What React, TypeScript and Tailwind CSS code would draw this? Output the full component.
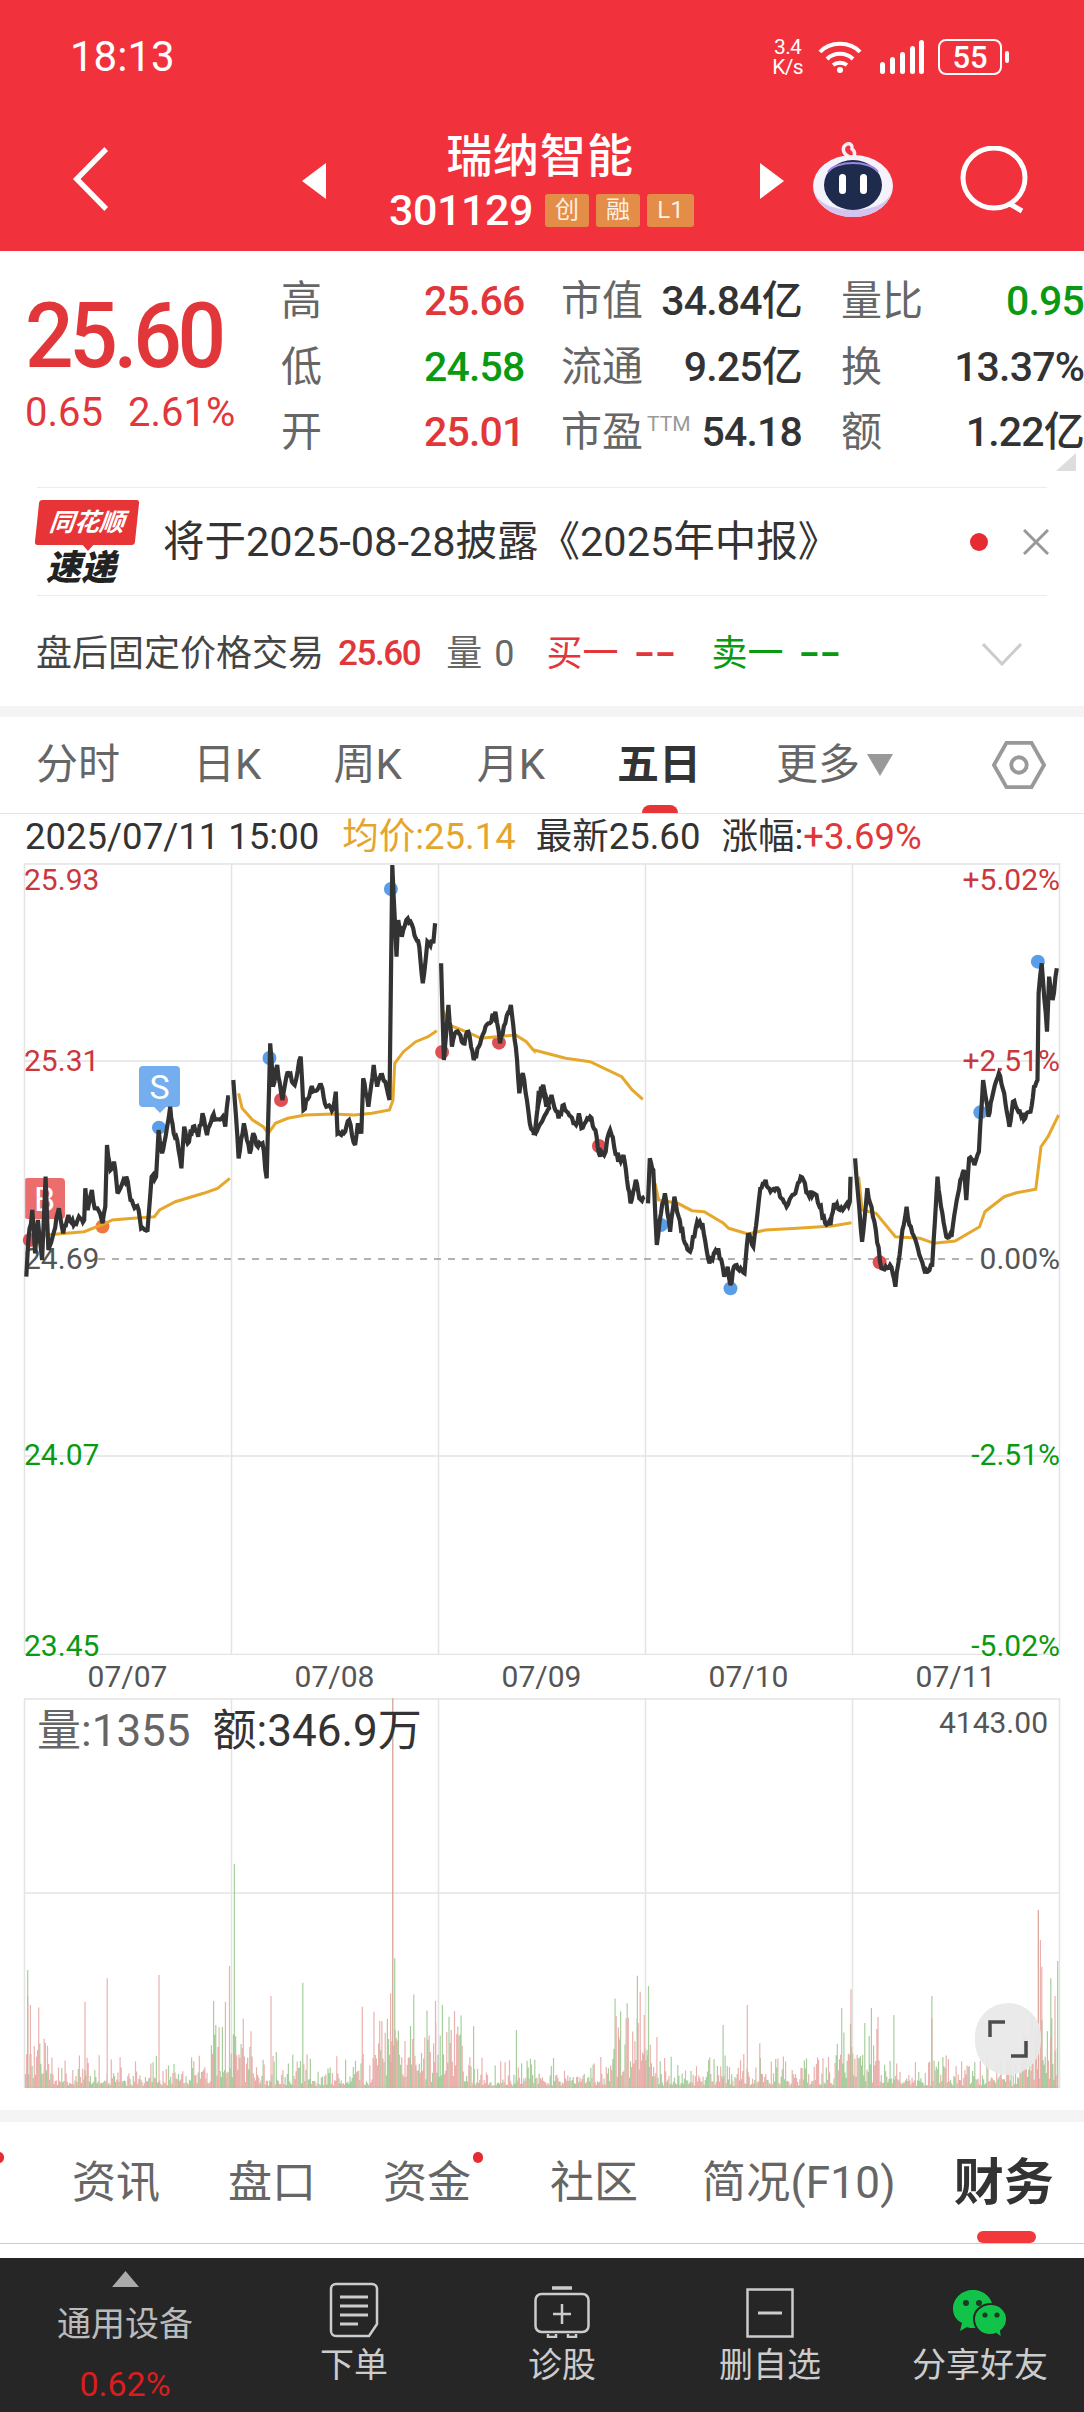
import React from "react";

type P = [number, number];
const a = (pts: number[][]): P[] => pts.map(([x, y]) => [x / 2.85, 860 + y / 3]);
const b = (pts: number[][]): P[] => pts.map(([x, y]) => [534 + x / 2.85, 860 + y / 3]);

let seed = 7;
const rnd = () => {
  seed = (seed * 16807) % 2147483647;
  return seed / 2147483647;
};

const jag = (pts: P[]) => {
  let out = "";
  pts.forEach((p, i) => {
    if (i > 0) {
      const q = pts[i - 1];
      const n = Math.max(1, Math.round(Math.abs(p[0] - q[0]) / 1.4));
      for (let k = 1; k < n; k++) {
        const t = k / n;
        const y = q[1] + (p[1] - q[1]) * t + (rnd() - 0.5) * 7;
        out += ` L${(q[0] + (p[0] - q[0]) * t).toFixed(1)} ${y.toFixed(1)}`;
      }
    }
    out += ` ${i === 0 ? "M" : "L"}${p[0].toFixed(1)} ${p[1].toFixed(1)}`;
  });
  return out;
};
const smooth = (pts: P[]) => pts.map((p, i) => `${i === 0 ? "M" : "L"}${p[0].toFixed(1)} ${p[1].toFixed(1)}`).join(" ");

const price: P[][] = [
  a([[75,1250],[80,1150],[92,1050],[100,1180],[108,1080],[120,1200],[130,950],[138,1170],[150,1130],[168,1045],[180,1120],[195,1065],[210,1095],[225,1070],[240,1080],[243,985],[250,1050],[262,990],[270,1045],[285,1060],[292,1090],[300,1040],[305,855],[315,930],[325,905],[335,1000],[360,950],[372,1020],[395,1050],[402,1105],[420,1115],[432,950],[445,950],[452,810],[462,880],[472,830],[485,740],[495,820],[505,840],[517,925],[525,800],[535,850],[550,800],[565,830],[577,760],[590,825],[605,770],[635,770],[642,800],[650,712],[655,712]]),
  a([[665,660],[680,895],[695,790],[712,880],[722,820],[735,860],[748,850],[760,955],[770,550],[778,680],[790,615],[805,720],[820,635],[840,675],[857,590],[865,750],[885,690],[915,675],[930,740],[950,745],[957,695],[962,820],[980,820],[995,780],[1012,855],[1020,790],[1030,815],[1035,655],[1050,740],[1065,615],[1075,680],[1085,645],[1098,665],[1110,720],[1118,15],[1130,290],[1135,180],[1145,230],[1158,180],[1170,185],[1185,235],[1195,260],[1205,370],[1218,245],[1235,250],[1240,190]]),
  [
    ...a([[1257,310],[1265,600],[1278,435],[1288,560],[1300,515],[1320,550],[1335,515],[1350,600],[1372,535],[1392,490],[1412,455],[1425,550],[1440,490],[1456,435],[1470,560],[1480,700],[1490,640],[1510,790],[1525,820],[1535,700],[1548,675],[1565,745]]),
    ...b([[0,820],[20,680],[35,740],[50,705],[70,775],[85,735],[120,795],[128,760],[135,805],[160,770],[175,810],[185,880],[200,885],[217,810],[240,905],[255,885],[265,960],[275,1030],[290,960],[300,1015],[315,1010]]),
  ],
  b([[325,1030],[330,895],[340,930],[350,1155],[362,1060],[373,1000],[388,1115],[400,1010],[412,1070],[430,1150],[445,1175],[465,1085],[480,1090],[500,1210],[525,1165],[542,1250],[552,1220],[560,1275],[570,1220],[600,1240],[610,1125],[625,1160],[645,985],[660,960],[670,985],[690,985],[720,1040],[745,1000],[760,950],[780,1000],[805,1005],[830,1090],[845,1095],[855,1030],[880,1050],[900,1025],[902,950]]),
  b([[915,895],[935,1145],[950,985],[970,1085],[990,1225],[1015,1215],[1030,1280],[1050,1110],[1062,1040],[1070,1095],[1090,1150],[1115,1240],[1135,1215],[1150,950],[1160,1040],[1175,1130],[1190,1130],[1205,1020],[1215,960],[1225,930],[1232,1020],[1240,895],[1255,915],[1268,875],[1280,660],[1295,770],[1305,715],[1325,640],[1340,700],[1355,800],[1365,725],[1400,775],[1415,755],[1425,680],[1435,660],[1438,400],[1447,310],[1462,515],[1468,350],[1478,420],[1490,325]]),
];

const avg: P[][] = [
  a([[95,1160],[130,1125],[240,1115],[300,1090],[320,1080],[380,1075],[440,1070],[455,1050],[500,1025],[580,1000],[620,985],[655,955]]),
  a([[680,700],[690,745],[720,780],[750,800],[765,820],[785,790],[820,775],[870,765],[950,762],[1010,765],[1060,760],[1110,750],[1120,720],[1125,610],[1150,575],[1185,545],[1220,530],[1245,512]]),
  [
    ...a([[1262,450],[1280,495],[1340,520],[1370,535],[1470,525],[1500,545],[1520,570],[1522,572]]),
    ...b([[0,570],[90,595],[160,605],[250,650],[280,690],[310,718]]),
  ],
  b([[345,970],[355,1020],[410,1030],[450,1052],[485,1055],[540,1090],[555,1105],[610,1122],[660,1110],[750,1105],[850,1098],[905,1088]]),
  b([[925,950],[935,1050],[975,1060],[1030,1130],[1100,1135],[1140,1150],[1200,1143],[1270,1100],[1285,1055],[1340,1010],[1375,998],[1430,988],[1445,860],[1465,830],[1495,765]]),
];

const blueDots: P[] = [...a([[1114,87],[768,594],[453,803]]), ...b([[1436,305],[1272,757],[560,1285],[362,1095]])];
const redDots: P[] = [...a([[801,720],[1260,576],[1422,548],[85,1140]]), ...b([[185,858],[985,1207]])];

const pricePath = price.map(jag).join(" ");
const avgPath = avg.map(smooth).join(" ");

const VBOTTOM = 2088;
const spikes: [number, number, "r" | "g"][] = [
  [40,990,"g"],[44,1095,"r"],[155,1015,"r"],[123,1085,"r"],[230,1005,"r"],[332,978,"r"],[339,672,"g"],[326,1085,"r"],[392,1068,"r"],[438,1028,"g"],[568,175,"g"],[568,175,"r"],[571,955,"g"],[565,1060,"r"],[524,1100,"r"],[541,1115,"r"],[630,1083,"r"],[640,1095,"g"],[685,1158,"g"],[747,1170,"g"],[895,1190,"g"],[922,1007,"g"],[926,1055,"r"],[938,1038,"g"],[932,1125,"r"],[1081,1095,"r"],[1046,1155,"g"],[1099,1210,"r"],[1231,1048,"r"],[1293,1125,"g"],[1348,1068,"g"],[1348,1135,"r"],[1502,810,"g"],[1502,810,"r"],[1505,900,"r"],[1505,980,"r"],[1507,980,"r"],[1530,963,"g"],[1520,1015,"g"],[1526,1068,"r"],
];
const hot = [28, 232, 394, 442, 636, 857, 1045];
let redBars = "";
let greenBars = "";
for (let x = 25.5; x < 1058; x += 1.1) {
  const near = Math.min(...hot.map((h) => Math.abs(h - x)));
  const boost = near < 22 ? 2.2 : 1;
  const r = rnd();
  let h = (2 + r * r * r * 28 + rnd() * 6) * boost;
  if (near < 22 && rnd() > 0.6) h += 18;
  const seg = `M${x.toFixed(1)} ${VBOTTOM}V${(VBOTTOM - h).toFixed(1)}`;
  if (rnd() > 0.5) redBars += seg;
  else greenBars += seg;
}
spikes.forEach(([zx, zy, c]) => {
  const seg = `M${(zx / 1.4465).toFixed(1)} ${VBOTTOM}V${(1640 + zy / 3).toFixed(1)}`;
  if (c === "r") redBars += seg;
  else greenBars += seg;
});

const gridX = [231.5, 438.5, 645.5, 852.5];

const Cell = ({ children, cls }: { children: React.ReactNode; cls: string }) => (
  <span className={`font-medium tracking-[-0.02em] text-[41px] leading-none ${cls}`}>{children}</span>
);
const Label = ({ children }: { children: React.ReactNode }) => <span className="text-[41px] leading-none text-[#666]">{children}</span>;

const Row = ({ l, v, vc, l2, v2, l3, v3, v3c }: { l: string; v: string; vc: string; l2: React.ReactNode; v2: string; l3: string; v3: string; v3c: string }) => (
  <>
    <div className="flex items-center h-[65.5px]"><Label>{l}</Label></div>
    <div className="flex items-center h-[65.5px]"><Cell cls={vc}>{v}</Cell></div>
    <div className="flex items-center justify-between h-[65.5px] pr-[39px]">
      <Label>{l2}</Label>
      <Cell cls="text-[#333]">{v2}</Cell>
    </div>
    <div className="flex items-center justify-between h-[65.5px]">
      <Label>{l3}</Label>
      <Cell cls={v3c}>{v3}</Cell>
    </div>
  </>
);

const LeftLabel = ({ t, y, c }: { t: string; y: string; c: string }) => (
  <span className={`absolute left-[24px] -translate-y-1/2 text-[30px] leading-none ${y} ${c}`}>{t}</span>
);
const RightLabel = ({ t, y, c }: { t: string; y: string; c: string }) => (
  <span className={`absolute right-[24px] -translate-y-1/2 text-[30px] leading-none ${y} ${c}`}>{t}</span>
);

const Robot = () => (
  <svg width="84" height="76" viewBox="0 0 84 76">
    <path d="M37 14c-6-3-6-10-1-12 3-1 5 1 5 3M41 7c3 2 3 5 2 8" fill="none" stroke="#f6eef6" strokeWidth="3.5" strokeLinecap="round" />
    <ellipse cx="42" cy="44" rx="40" ry="31" fill="#f4f2fb" />
    <path d="M4 52c5 15 21 23 38 23s33-8 38-23c-6 11-21 16-38 16S10 63 4 52z" fill="#d3c5f0" />
    <ellipse cx="42" cy="43" rx="29" ry="25" fill="#1e2b4d" />
    <path d="M17 30c8-12 42-12 50 0" fill="none" stroke="#9f86e6" strokeWidth="2" />
    <rect x="28" y="32" width="7" height="20" rx="3.5" fill="#fff" />
    <rect x="49" y="32" width="7" height="20" rx="3.5" fill="#fff" />
  </svg>
);

const BottomItem = ({ icon, t, w }: { icon: React.ReactNode; t: string; w: string }) => (
  <div className={`flex flex-col items-center shrink-0 ${w}`}>
    <div className="h-[58px] flex items-end justify-center">{icon}</div>
    <span className="mt-[5px] text-[34px] leading-[44px] text-[#ccc] whitespace-nowrap">{t}</span>
  </div>
);

export default function App() {
  return (
    <div className="relative w-[1084px] h-[2412px] overflow-hidden bg-white font-['Roboto','Noto_Sans_CJK_SC',sans-serif]">
      {/* Header */}
      <header className="h-[251px] bg-[#f1323c] text-white flex flex-col">
        <div className="flex items-center h-[114px] pl-[70px] pr-[75px]">
          <span className="text-[42px] leading-none">18:13</span>
          <div className="ml-auto flex items-center">
            <div className="flex flex-col items-center text-[21px] leading-[20px] tracking-[-0.03em]">
              <span>3.4</span>
              <span>K/s</span>
            </div>
            <svg className="ml-[15px]" width="44" height="34" viewBox="0 0 44 34" fill="none" stroke="#fff" strokeWidth="4">
              <path d="M2 12C12 1 32 1 42 12" />
              <path d="M9 19c7-7 19-7 26 0" />
              <path d="M15 25c4-3 10-3 14 0" />
              <circle cx="22" cy="30" r="3" fill="#fff" stroke="none" />
            </svg>
            <svg className="ml-[18px]" width="44" height="34" viewBox="0 0 44 34" fill="#fff">
              <rect x="0" y="22" width="5" height="12" rx="2.5" />
              <rect x="10" y="17" width="5" height="17" rx="2.5" />
              <rect x="20" y="12" width="5" height="22" rx="2.5" />
              <rect x="30" y="6" width="5" height="28" rx="2.5" />
              <rect x="39" y="0" width="5" height="34" rx="2.5" />
            </svg>
            <div className="ml-[14px] w-[64px] h-[36px] rounded-[8px] border-2 border-white flex items-center justify-center text-[31px] leading-none font-medium">55</div>
            <div className="ml-[3px] w-[4px] h-[12px] rounded-full bg-white" />
          </div>
        </div>
        <div className="relative flex-1 flex items-start">
          <svg className="ml-[72px] mt-[32px]" width="42" height="66" viewBox="0 0 42 66" fill="none" stroke="#fff" strokeWidth="5.5">
            <path d="M36 3 5 33l31 30" transform="scale(0.95 1)" />
          </svg>
          <svg className="ml-[188px] mt-[49px]" width="24" height="36" viewBox="0 0 24 36" fill="#fff"><path d="M24 0v36L0 18z" /></svg>
          <div className="ml-[32px] w-[364px] flex flex-col items-center">
            <span className="mt-[16px] text-[46px] leading-[52px] font-medium tracking-[0.02em]">瑞纳智能</span>
            <div className="mt-[8px] flex items-center pl-[3px] whitespace-nowrap">
              <span className="text-[43px] leading-[40px] font-medium tracking-[-0.01em]">301129</span>
              <span className="ml-[12px] w-[44px] h-[33px] rounded-[3px] bg-[#e38d49] flex items-center justify-center text-[24px] leading-none text-[#fdf0e0]">创</span>
              <span className="ml-[7px] w-[44px] h-[33px] rounded-[3px] bg-[#e38d49] flex items-center justify-center text-[24px] leading-none text-[#fdf0e0]">融</span>
              <span className="ml-[7px] w-[47px] h-[33px] rounded-[3px] bg-[#e38d49] flex items-center justify-center text-[24px] leading-none text-[#fdf0e0]">L1</span>
            </div>
          </div>
          <svg className="ml-[38px] mt-[49px]" width="24" height="36" viewBox="0 0 24 36" fill="#fff"><path d="M0 0v36l24-18z" /></svg>
          <div className="ml-[27px] mt-[28px]"><Robot /></div>
          <svg className="ml-[65px] mt-[32px]" width="70" height="70" viewBox="0 0 70 70" fill="none" stroke="#fff" strokeWidth="5">
            <ellipse cx="34" cy="32" rx="31" ry="30" />
            <path d="M50 58l12 7" />
          </svg>
        </div>
      </header>

      {/* Quote */}
      <section className="relative h-[236px] flex">
        <div className="w-[281px] pl-[25px] flex flex-col">
          <span className="mt-[41px] origin-left scale-x-[0.94] text-[91px] leading-[88px] font-medium text-[#e2373a] tracking-[-0.05em]">25.60</span>
          <div className="mt-[13px] flex text-[40px] leading-[40px] text-[#e2373a]">
            <span>0.65</span>
            <span className="ml-[25px]">2.61%</span>
          </div>
        </div>
        <div className="pt-[18px] grid grid-cols-[143px_137px_280px_243px] h-fit">
          <Row l="高" v="25.66" vc="text-[#e2373a]" l2="市值" v2="34.84亿" l3="量比" v3="0.95" v3c="text-[#0a9a12]" />
          <Row l="低" v="24.58" vc="text-[#0a9a12]" l2="流通" v2="9.25亿" l3="换" v3="13.37%" v3c="text-[#333]" />
          <Row
            l="开"
            v="25.01"
            vc="text-[#e2373a]"
            l2={
              <span className="flex items-start">
                市盈<span className="ml-[4px] text-[21px] leading-[24px] text-[#999]">TTM</span>
              </span>
            }
            v2="54.18"
            l3="额"
            v3="1.22亿"
            v3c="text-[#333]"
          />
        </div>
        <svg className="absolute left-[1056px] top-[202px]" width="20" height="18" viewBox="0 0 20 18" fill="#ddd"><path d="M20 0v18H0z" /></svg>
      </section>

      {/* News */}
      <section className="mx-[37px] w-[1010px] h-[109px] border-y-[1.5px] border-[#ececec] flex items-center">
        <div className="relative w-[100px] h-[84px] shrink-0">
          <div className="absolute left-0 top-0 w-[100px] h-[45px] -skew-x-[6deg] rounded-[3px] bg-[#e73436] flex items-center justify-center text-[25px] leading-none font-bold italic text-white">同花顺</div>
          <div className="absolute left-[44px] top-[43px] w-0 h-0 border-x-[7px] border-x-transparent border-t-[8px] border-t-[#e73436]" />
          <div className="absolute left-[9px] top-[51px] text-[35px] leading-none font-black italic text-[#222]">速递</div>
        </div>
        <span className="ml-[26px] text-[41.5px] leading-none text-[#333] whitespace-nowrap">将于2025-08-28披露《2025年中报》</span>
        <span className="absolute left-[970px] w-[18px] h-[18px] rounded-full bg-[#e72b33]" />
        <svg className="absolute left-[1023px]" width="26" height="26" viewBox="0 0 26 26" stroke="#999" strokeWidth="3"><path d="M1 1l24 24M25 1 1 25" /></svg>
      </section>

      {/* After hours */}
      <section className="h-[110px] pl-[36px] pt-[5px] flex items-center text-[36px] leading-none whitespace-nowrap">
        <span className="text-[#444]">盘后固定价格交易</span>
        <span className="ml-[14px] font-medium text-[#e2373a] tracking-[-0.04em] text-[35px]">25.60</span>
        <span className="ml-[26px] text-[#666]">量</span>
        <span className="ml-[12px] text-[#666]">0</span>
        <span className="ml-[32px] text-[#e2373a]">买一</span>
        <span className="ml-[15px] w-[39px] origin-left scale-x-[1.55] text-[40px] text-[#e2373a] font-medium">--</span>
        <span className="ml-[39px] text-[#0a9a12]">卖一</span>
        <span className="ml-[15px] w-[39px] origin-left scale-x-[1.55] text-[40px] text-[#0a9a12] font-medium">--</span>
        <svg className="absolute left-[982px]" width="40" height="24" viewBox="0 0 40 24" fill="none" stroke="#ccc" strokeWidth="3"><path d="M1 2l19 20L39 2" /></svg>
      </section>
      <div className="h-[11px] bg-[#f4f4f4]" />

      {/* Period tabs */}
      <nav className="relative h-[97px] border-b border-[#e4e4e4] flex items-center pl-[36px] text-[42px] leading-none text-[#666] whitespace-nowrap">
        <span>分时</span>
        <span className="ml-[73px]">日K</span>
        <span className="ml-[72px]">周K</span>
        <span className="ml-[75px]">月K</span>
        <span className="ml-[72px] font-bold text-[#333]">五日</span>
        <span className="ml-[75px]">更多</span>
        <svg className="ml-[7px]" width="26" height="22" viewBox="0 0 26 22" fill="#999"><path d="M0 0h26L13 22z" /></svg>
        <svg className="ml-[99px]" width="54" height="52" viewBox="0 0 56 52" fill="none" stroke="#999" strokeWidth="4"><path d="M15 3h26l13 23-13 23H15L2 26z" /><circle cx="28" cy="26" r="8" /></svg>
        <span className="absolute left-[642px] bottom-0 w-[36px] h-[8px] rounded-t-full bg-[#e73436]" />
      </nav>

      {/* Info line */}
      <div className="h-[49px] pl-[25px] pb-[2px] flex items-center text-[36.5px] leading-none text-[#333] whitespace-nowrap">
        <span>2025/07/11 15:00</span>
        <span className="ml-[23px] text-[#e4a52e]">均价:25.14</span>
        <span className="ml-[20px]">最新25.60</span>
        <span className="ml-[21px]">涨幅:</span>
        <span className="text-[#e2373a]">+3.69%</span>
      </div>

      {/* Main chart */}
      <div className="relative h-[792px]">
        <span className="absolute left-[139px] w-[41px] top-[203px] h-[41px] rounded-[4px] bg-[#74aeee] flex items-center justify-center text-[34px] leading-none text-white">S</span>
        <span className="absolute left-[154px] top-[244px] w-0 h-0 border-x-[6px] border-x-transparent border-t-[6px] border-t-[#74aeee]" />
        <span className="absolute left-[24px] w-[41px] top-[315px] h-[41px] rounded-[4px] bg-[#ec6d6d] flex items-center justify-center text-[34px] leading-none text-white">B</span>
        <LeftLabel t="24.69" y="top-[396px]" c="text-[#555]" />
        <svg className="relative block" width="1084" height="792" viewBox="0 863 1084 792" fill="none">
          <path d={`M24.5 863V1655M1059.5 863V1655M24 864H1060M24 1061H1060M24 1456H1060M24 1654.5H1060${gridX.map((x) => `M${x} 863V1655`).join("")}`} stroke="#e4e4e4" strokeWidth="1.5" />
          <path d="M98 1259H980" stroke="#999" strokeWidth="1.5" strokeDasharray="7 7" />
          {blueDots.map((p, i) => (
            <circle key={i} cx={p[0]} cy={p[1]} r="7" fill="#5b9ee8" />
          ))}
          {redDots.map((p, i) => (
            <circle key={i} cx={p[0]} cy={p[1]} r="7" fill="#de5056" />
          ))}
          <circle cx="102.5" cy="1226.5" r="7" fill="#f0783c" />
          <path d={avgPath} stroke="#e5a82c" strokeWidth="3" />
          <path d={pricePath} stroke="#333" strokeWidth="4.2" strokeLinejoin="miter" strokeMiterlimit="3" />
        </svg>
        <LeftLabel t="25.93" y="top-[17px]" c="text-[#c9383c]" />
        <LeftLabel t="25.31" y="top-[198px]" c="text-[#c9383c]" />
        <LeftLabel t="24.07" y="top-[592px]" c="text-[#0a9a12]" />
        <LeftLabel t="23.45" y="top-[783px]" c="text-[#0a9a12]" />
        <RightLabel t="+5.02%" y="top-[17px]" c="text-[#c9383c]" />
        <RightLabel t="+2.51%" y="top-[198px]" c="text-[#c9383c]" />
        <RightLabel t="0.00%" y="top-[396px]" c="text-[#555]" />
        <RightLabel t="-2.51%" y="top-[592px]" c="text-[#0a9a12]" />
        <RightLabel t="-5.02%" y="top-[783px]" c="text-[#0a9a12]" />
      </div>

      {/* Dates */}
      <div className="h-[43px] pl-[24px] grid grid-cols-[207px_207px_207px_207px_207px] items-center text-[30px] leading-none text-[#555] text-center">
        <span>07/07</span>
        <span>07/08</span>
        <span>07/09</span>
        <span>07/10</span>
        <span>07/11</span>
      </div>

      {/* Volume chart */}
      <div className="relative h-[390px]">
        <svg className="block" width="1084" height="390" viewBox="0 1698 1084 390" fill="none">
          <path d={`M24.5 1698V2088M1059.5 1698V2088M24 1699H1060M24 1893H1060M24 2087H1060${gridX.map((x) => `M${x} 1698V2088`).join("")}`} stroke="#e4e4e4" strokeWidth="1.5" />
          <path d={greenBars} stroke="#9cca92" strokeWidth="1.2" opacity="0.9" />
          <path d={redBars} stroke="#e8a3a0" strokeWidth="1.2" opacity="0.85" />
        </svg>
        <div className="absolute left-[37px] top-[11px] h-[44px] flex items-center text-[44px] leading-none whitespace-nowrap">
          <span className="text-[#666]">量:1355</span>
          <span className="ml-[22px] text-[#333]">额:346.9万</span>
        </div>
        <span className="absolute right-[36px] top-[10px] text-[30px] leading-[30px] text-[#555]">4143.00</span>
        <div className="absolute left-[975px] top-[305px] w-[66px] h-[72px] rounded-full bg-[#e9e9e9] opacity-95 flex items-center justify-center">
          <svg width="40" height="38" viewBox="0 0 40 38" fill="none" stroke="#444" strokeWidth="3.5">
            <path d="M2 17V2h15M38 21v15H23" />
          </svg>
        </div>
      </div>

      <div className="h-[22px]" />
      <div className="h-[12px] bg-[#f4f4f4]" />

      {/* Bottom tabs */}
      <nav className="relative h-[122px] border-b-[1.5px] border-[#ccc] flex items-center pl-[72px] text-[44px] leading-none text-[#666] whitespace-nowrap">
        <span>资讯</span>
        <span className="ml-[68px]">盘口</span>
        <span className="ml-[67px]">资金</span>
        <span className="ml-[79px]">社区</span>
        <span className="ml-[64px] tracking-[0.005em]">简况(F10)</span>
        <span className="ml-[58px] text-[50px] font-bold text-[#333]">财务</span>
        <span className="absolute left-[-6px] top-[30px] w-[10px] h-[11px] rounded-full bg-[#e72b33]" />
        <span className="absolute left-[473px] top-[30px] w-[10px] h-[11px] rounded-full bg-[#e72b33]" />
        <span className="absolute left-[977px] bottom-0 w-[59px] h-[12px] rounded-full bg-[#f3383c]" />
      </nav>
      <div className="h-[14px]" />

      {/* Bottom bar */}
      <footer className="h-[154px] bg-[#262626] flex items-start overflow-hidden">
        <div className="w-[250px] shrink-0 flex flex-col items-center">
          <svg className="mt-[13px]" width="27" height="16" viewBox="0 0 27 16" fill="#aaa"><path d="M13.5 0 27 16H0z" /></svg>
          <span className="mt-[15px] text-[34px] leading-[44px] text-[#bbb]">通用设备</span>
          <span className="mt-[16px] text-[34px] leading-[44px] text-[#d81e1e]">0.62%</span>
        </div>
        <div className="flex shrink-0 pt-[22px] pl-[4px]">
          <BottomItem
            w="w-[200px]"
            icon={
              <svg width="50" height="56" viewBox="0 0 50 56" fill="none" stroke="#ccc" strokeWidth="2.5">
                <path d="M7 2h36a5 5 0 0 1 5 5v35l-8 12H7a5 5 0 0 1-5-5V7a5 5 0 0 1 5-5z" />
                <path d="M11 15h28M11 24h28M11 33h28M11 42h18" strokeWidth="3" />
              </svg>
            }
            t="下单"
          />
          <BottomItem
            w="w-[216px]"
            icon={
              <svg width="56" height="52" viewBox="0 0 56 52" fill="none" stroke="#ccc" strokeWidth="2.5">
                <path d="M18 2h20" strokeWidth="3.5" />
                <rect x="1.5" y="8" width="53" height="38" rx="6" />
                <path d="M14 48v3h8v-3M34 48v3h8v-3M28 18v20M19 28h18" />
              </svg>
            }
            t="诊股"
          />
          <BottomItem
            w="w-[200px]"
            icon={
              <svg width="48" height="50" viewBox="0 0 48 50" fill="none" stroke="#ccc" strokeWidth="2.5">
                <rect x="1.5" y="1.5" width="45" height="47" />
                <path d="M12 25h24" strokeWidth="3" />
              </svg>
            }
            t="删自选"
          />
          <BottomItem
            w="w-[220px]"
            icon={
              <svg width="56" height="48" viewBox="0 0 56 48">
                <path d="M21 0c11 0 20 8 20 19 0 11-9 19-20 19-2 0-4 0-6-1l-7 4 2-8C4 30 1 25 1 19 1 8 10 0 21 0z" fill="#12c34a" />
                <path d="M39 14c9 0 16 7 16 15 0 5-2 9-6 12l1 7-6-4c-2 1-4 1-6 1-9 0-16-7-16-16s8-15 17-15z" fill="#12c34a" stroke="#262626" strokeWidth="2" />
                <circle cx="14" cy="13" r="3" fill="#1d3a28" />
                <circle cx="27" cy="13" r="3" fill="#1d3a28" />
                <circle cx="33" cy="25" r="2.6" fill="#1d3a28" />
                <circle cx="45" cy="25" r="2.6" fill="#1d3a28" />
              </svg>
            }
            t="分享好友"
          />
        </div>
      </footer>
    </div>
  );
}
